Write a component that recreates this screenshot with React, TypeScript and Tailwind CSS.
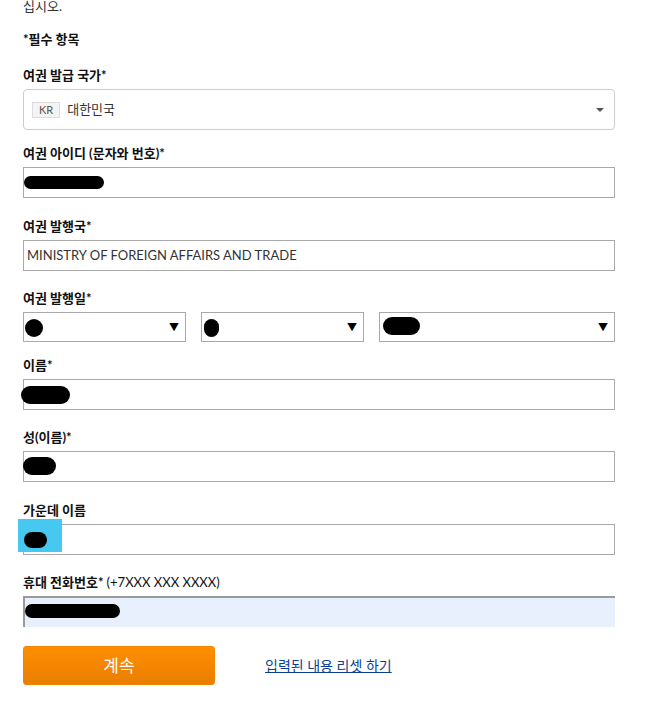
import React from "react";

const FONT = { fontFamily: 'Lato, "Noto Sans CJK KR", sans-serif' };

function Blob({ className }: { className: string }) {
  return <div className={"absolute bg-black rounded-full " + className} />;
}

function Label({ children }: { children: React.ReactNode }) {
  return (
    <div className="h-[18px] leading-[18px] text-[13px] font-bold text-[#111] mb-[5px]">{children}</div>
  );
}

function Arrow() {
  return <span className="text-[10px] text-black leading-none">▼</span>;
}

export default function App() {
  return (
    <div className="w-[645px] h-[708px] overflow-hidden bg-white" style={FONT}>
      <div className="pl-[23px] w-[615px]">
        <div className="-mt-[3px] h-[18px] leading-[18px] text-[13px] text-[#333]">십시오.</div>
        <div className="mt-[15px] h-[18px] leading-[18px] text-[13px] font-bold text-[#111]">*필수 항목</div>

        <div className="mt-[18px]">
          <Label>여권 발급 국가*</Label>
          <div className="h-[41px] border border-[#ccc] rounded-[4px] flex items-center pl-[8px] pr-[10px]">
            <span className="h-[16px] px-[6px] border border-[#ddd] bg-[#f4f4f4] text-[11px] leading-[14px] text-[#555]">KR</span>
            <span className="ml-[7px] text-[13px] text-[#333]">대한민국</span>
            <span className="ml-auto w-0 h-0 border-l-[4px] border-r-[4px] border-t-[4px] border-l-transparent border-r-transparent border-t-[#555]" />
          </div>
        </div>

        <div className="mt-[14px]">
          <Label>여권 아이디 (문자와 번호)*</Label>
          <div className="relative h-[31px] border border-[#a9a9a9]">
            <Blob className="left-[0px] top-[8px] w-[80px] h-[13px]" />
          </div>
        </div>

        <div className="mt-[19px]">
          <Label>여권 발행국*</Label>
          <div className="h-[31px] border border-[#a9a9a9] flex items-center pl-[3px] text-[13px] text-[#333]">
            MINISTRY OF FOREIGN AFFAIRS AND TRADE
          </div>
        </div>

        <div className="mt-[18px]">
          <Label>여권 발행일*</Label>
          <div className="flex gap-[15px]">
            <div className="relative w-[163px] h-[30px] border border-[#a9a9a9] flex items-center justify-end pr-[6px]">
              <Blob className="left-[1px] top-[6px] w-[18px] h-[18px]" />
              <Arrow />
            </div>
            <div className="relative w-[163px] h-[30px] border border-[#a9a9a9] flex items-center justify-end pr-[6px]">
              <Blob className="left-[2px] top-[6px] w-[15px] h-[18px]" />
              <Arrow />
            </div>
            <div className="relative flex-1 h-[30px] border border-[#a9a9a9] flex items-center justify-end pr-[6px]">
              <Blob className="left-[3px] top-[4px] w-[37px] h-[18px]" />
              <Arrow />
            </div>
          </div>
        </div>

        <div className="mt-[14px]">
          <Label>이름*</Label>
          <div className="relative h-[31px] border border-[#a9a9a9]">
            <Blob className="-left-[3px] top-[6px] w-[49px] h-[18px]" />
          </div>
        </div>

        <div className="mt-[18px]">
          <Label>성(이름)*</Label>
          <div className="relative h-[31px] border border-[#a9a9a9]">
            <Blob className="-left-[1px] top-[5px] w-[33px] h-[18px]" />
          </div>
        </div>

        <div className="mt-[19px]">
          <Label>가운데 이름</Label>
          <div className="relative h-[31px] border border-[#a9a9a9]">
            <div className="absolute -left-[6px] -top-[6px] w-[44px] h-[33px] bg-[#46c8f0]" />
            <Blob className="left-[0px] top-[7px] w-[23px] h-[16px]" />
          </div>
        </div>

        <div className="mt-[18px]">
          <Label>
            휴대 전화번호* <span className="font-normal">(+7XXX XXX XXXX)</span>
          </Label>
          <div className="relative h-[31px] bg-[#e8f0fe] border-t-2 border-l-2 border-[#9a9a9a]">
            <Blob className="left-[0px] top-[6px] w-[95px] h-[14px]" />
          </div>
        </div>

        <div className="mt-[19px] flex items-center">
          <button className="w-[192px] h-[39px] rounded-[3px] bg-gradient-to-b from-[#ff8e00] to-[#e97e00] text-white text-[17px] border border-[#f08400]">
            계속
          </button>
          <a href="#" className="ml-[50px] text-[14px] text-[#0b3d91] underline">입력된 내용 리셋 하기</a>
        </div>
      </div>
    </div>
  );
}
